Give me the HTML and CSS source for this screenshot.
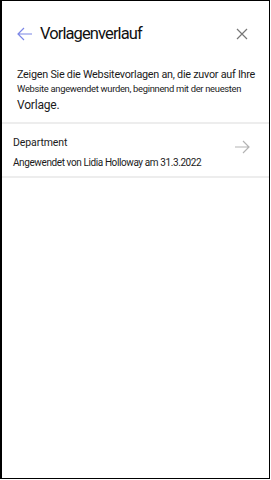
FILE: index.html
```html
<!DOCTYPE html>
<html lang="de">
<head>
<meta charset="utf-8">
<link rel="stylesheet" href="styles.css">
</head>
<body>
<div class="frame">
  <header class="header">
    <button class="icon-btn back" aria-label="Zurück">
      <svg width="16" height="14" viewBox="0 0 16 14"><path d="M15 7H1.5M7 1L1 7l6 6" fill="none" stroke="#7b86e6" stroke-width="1.2"/></svg>
    </button>
    <h1 class="title">Vorlagenverlauf</h1>
    <button class="icon-btn close" aria-label="Schließen">
      <svg width="12" height="12" viewBox="0 0 12 12"><path d="M1 1l10 10M11 1L1 11" fill="none" stroke="#777" stroke-width="1.2"/></svg>
    </button>
  </header>
  <p class="desc"><span class="l1">Zeigen Sie die Websitevorlagen an, die zuvor auf Ihre</span> <span class="l2">Website angewendet wurden, beginnend mit der neuesten</span> <span class="l3">Vorlage.</span></p>
  <ul class="list">
    <li class="item">
      <div class="item-text">
        <div class="item-title">Department</div>
        <div class="item-sub">Angewendet von Lidia Holloway am 31.3.2022</div>
      </div>
      <svg class="chev" width="15" height="14" viewBox="0 0 15 14"><path d="M0 7h13.5M8 1l6 6-6 6" fill="none" stroke="#b3b3b3" stroke-width="1.2"/></svg>
    </li>
  </ul>
</div>
</body>
</html>
```
FILE: styles.css
```css
* { box-sizing: border-box; }
html, body { margin: 0; padding: 0; background: #fff; }
body { font-family: Roboto, "Liberation Sans", Arial, sans-serif; color: #1b1b1b; }
.frame {
  width: 270px;
  height: 479px;
  border: 1px solid #000;
  border-left-width: 2px;
  background: #fff;
}
.header {
  display: flex;
  align-items: center;
  height: 52px;
  padding: 13px 0 0 14px;
}
.icon-btn {
  background: none;
  border: 0;
  padding: 0;
  display: flex;
  align-items: center;
  justify-content: center;
}
.back { width: 18px; height: 20px; }
.title {
  margin: 0 0 0 6px;
  font-size: 16.5px;
  font-weight: normal;
  letter-spacing: -0.9px;
  color: #111;
  flex: 1;
}
.close { width: 14px; height: 14px; margin-right: 20px; }
.desc {
  margin: 15px 4px 0 15px;
  color: #1b1b1b;
}
.desc span { display: block; white-space: nowrap; }
.l1 { font-size: 10.8px; line-height: 13.5px; letter-spacing: -0.25px; }
.l2 { font-size: 9.4px; line-height: 14px; letter-spacing: -0.3px; }
.l3 { font-size: 12px; line-height: 18px; letter-spacing: -0.2px; }
.list {
  list-style: none;
  margin: 8.5px 0 0;
  padding: 0;
  border-top: 2px solid #ededed;
}
.item {
  display: flex;
  align-items: center;
  height: 54px;
  padding: 0 19px 0 11px;
  border-bottom: 2px solid #ededed;
}
.item-text { flex: 1; margin-top: 5px; }
.item-title { font-size: 10.5px; line-height: 14px; letter-spacing: -0.1px; }
.item-sub { font-size: 10px; line-height: 14px; margin-top: 6px; letter-spacing: -0.4px; }
.chev { margin-top: -6px; }
```
